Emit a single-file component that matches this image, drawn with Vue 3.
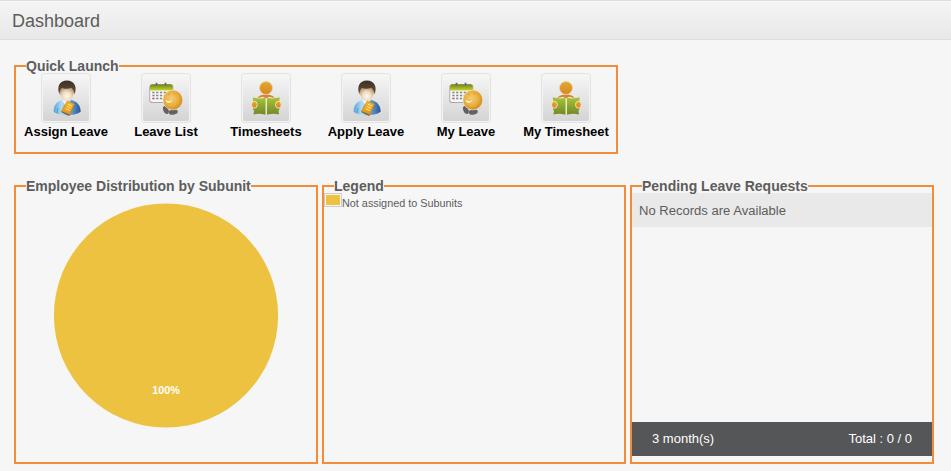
<script setup>
const shortcuts = [
  { label: 'Assign Leave', icon: 'person' },
  { label: 'Leave List', icon: 'calendar' },
  { label: 'Timesheets', icon: 'reader' },
  { label: 'Apply Leave', icon: 'person' },
  { label: 'My Leave', icon: 'calendar' },
  { label: 'My Timesheet', icon: 'reader' },
]
const dayColumns = [0, 1, 2, 3, 4]
const dayRows = [0, 1, 2]
</script>

<template>
  <svg class="defs" width="0" height="0" aria-hidden="true">
    <defs>
      <linearGradient id="tile" x1="0" y1="0" x2="0" y2="1">
        <stop offset="0" stop-color="#f6f6f6" /><stop offset="1" stop-color="#d4d4d4" />
      </linearGradient>
      <linearGradient id="shirt" x1="0" y1="0" x2="1" y2="0">
        <stop offset="0" stop-color="#55a5d8" /><stop offset="0.3" stop-color="#b5dcf3" />
        <stop offset="0.6" stop-color="#6ca6d2" /><stop offset="1" stop-color="#28559a" />
      </linearGradient>
      <radialGradient id="face" cx="0.5" cy="0.68" r="0.6">
        <stop offset="0" stop-color="#fff8ec" /><stop offset="0.5" stop-color="#eddcc2" /><stop offset="1" stop-color="#b8946b" />
      </radialGradient>
      <linearGradient id="hair" x1="0" y1="0" x2="0" y2="1">
        <stop offset="0" stop-color="#3b3027" /><stop offset="1" stop-color="#66503c" />
      </linearGradient>
      <linearGradient id="card" x1="0" y1="0" x2="0" y2="1">
        <stop offset="0" stop-color="#f6b51f" /><stop offset="1" stop-color="#e29518" />
      </linearGradient>
      <linearGradient id="band" x1="0" y1="0" x2="0" y2="1">
        <stop offset="0" stop-color="#75801c" /><stop offset="1" stop-color="#c0d62b" />
      </linearGradient>
      <radialGradient id="ball" cx="0.42" cy="0.42" r="0.62">
        <stop offset="0" stop-color="#f6cc71" /><stop offset="0.6" stop-color="#e9ae3d" /><stop offset="1" stop-color="#cb8626" />
      </radialGradient>
      <linearGradient id="skin" x1="0" y1="0" x2="0" y2="1">
        <stop offset="0" stop-color="#e3aa2d" /><stop offset="1" stop-color="#d98528" />
      </linearGradient>
      <linearGradient id="book" x1="0" y1="0" x2="0" y2="1">
        <stop offset="0" stop-color="#a9c532" /><stop offset="1" stop-color="#71872a" />
      </linearGradient>
    </defs>
  </svg>

  <header class="heading"><h1>Dashboard</h1></header>

  <main>
    <section class="panel quick">
      <h2>Quick Launch</h2>
      <nav class="shortcuts">
        <a v-for="item in shortcuts" :key="item.label" class="shortcut">
          <svg width="50" height="50" viewBox="0 0 50 50">
            <rect x="0.5" y="0.5" width="49" height="49" rx="3" fill="#f4f4f3" stroke="#e2e2de" />
            <rect x="2" y="2" width="46" height="46" rx="2" fill="url(#tile)" />
            <g v-if="item.icon === 'person'">
              <path d="M12.700 38.800C12.500 32 16 28.500 21.500 26.700H30C36 28.500 39.500 32 39.700 38.800C36 41.500 31 42.300 26 42.300S15.500 41.500 12.700 38.800Z" fill="url(#shirt)" />
              <path d="M21 27L24.500 33L30 27Z" fill="#edf4f9" />
              <path d="M16 40L17 35M36.500 39.500L35 35" stroke="#3473a6" stroke-width="0.500" fill="none" />
              <path d="M18.600 18Q18.800 13 25.500 13T33 18C33 23 29.500 28 26 28S18.600 23 18.600 18Z" fill="url(#face)" />
              <path d="M18.400 21.500C15.700 14 18 7.700 26 7.500C33.500 7.700 36.500 14 33.500 21.500C33.200 18 32 16.300 30.500 14.700C27.500 16 23 16 21 14.700C19.300 16.300 18.700 18.500 18.400 21.500Z" fill="url(#hair)" />
              <path d="M26.300 28L33.500 31L28.800 41.800L20.500 37.800Z" fill="url(#card)" stroke="#b9781d" stroke-width="0.500" stroke-linejoin="round" />
              <path d="M20.300 38L28.700 42L28.300 43L20.500 39.200Z" fill="#6a5437" />
              <path d="M26.800 31.200L31 33M25.800 33.500L30 35.300M24.800 35.800L28.800 37.500" stroke="#ffeaa2" stroke-width="1" />
            </g>
            <g v-else-if="item.icon === 'calendar'">
              <rect x="8.300" y="11.500" width="24" height="18.500" rx="2.800" fill="#a8a8a8" />
              <rect x="9.200" y="12" width="22.200" height="17" rx="2" fill="#f8f8f8" />
              <path d="M9 17.500V13.500Q9 11.300 11.200 11.300H29.600Q31.800 11.300 31.800 13.500V17.500Z" fill="url(#band)" />
              <path d="M15.500 9.700V12.500M24.500 9.700V12.500" stroke="#65686b" stroke-width="1.700" />
              <g v-for="row in dayRows" :key="row">
                <rect v-for="col in dayColumns" :key="col" :x="11.3 + col * 3.8" :y="18.700 + row * 3" width="2.300" height="1.600" :fill="row === 2 && col === 0 ? '#c75b40' : '#88888d'" />
              </g>
              <ellipse cx="24.900" cy="37" rx="2.600" ry="4.200" transform="rotate(-22 24.900 37)" fill="#626362" />
              <ellipse cx="32.300" cy="39" rx="4.500" ry="2.700" transform="rotate(-8 32.300 39)" fill="#626362" />
              <circle cx="31.800" cy="27" r="9.900" fill="url(#ball)" stroke="#f6e7c7" stroke-width="0.600" />
              <path d="M24.500 26.700Q28.500 29.500 31.200 27.200Q30 30.300 27 29.800Q25 29.300 24.500 26.700Z" fill="#fffbea" />
              <path d="M27.500 21.500L28.500 21M33 20.500L34 21" stroke="#c17a20" stroke-width="0.800" />
            </g>
            <g v-else>
              <path d="M16.500 25Q18 21.700 25 21.500Q32 21.700 33.500 25L28 23.800L25 25.500L22 23.800Z" fill="#d8842d" />
              <circle cx="25" cy="15" r="6.500" fill="url(#skin)" stroke="#f0d6a7" stroke-width="0.600" />
              <path d="M11.800 24.300Q18.500 26.300 24.700 24.800V41.800Q18 39.800 12.500 41.500L13 38Q11 35 12.500 31Z" fill="url(#book)" />
              <path d="M38.700 24.300Q32 26.300 25.800 24.800V41.800Q32.500 39.800 38 41.500L37.500 38Q39.500 35 38 31Z" fill="url(#book)" />
              <path d="M25.250 25V42" stroke="#f0f3dc" stroke-width="1" />
              <ellipse cx="13.400" cy="31.700" rx="2.900" ry="3.500" fill="url(#skin)" stroke="#f7f0d9" stroke-width="0.800" />
              <ellipse cx="37.400" cy="31.700" rx="2.900" ry="3.500" fill="url(#skin)" stroke="#f7f0d9" stroke-width="0.800" />
            </g>
          </svg>
          <span>{{ item.label }}</span>
        </a>
      </nav>
    </section>

    <div class="row">
      <section class="panel">
        <h2>Employee Distribution by Subunit</h2>
        <svg class="pie" width="300" height="260" viewBox="0 0 300 260">
          <circle cx="150" cy="122.500" r="112.100" fill="#edc240" />
          <text x="150" y="201" text-anchor="middle">100%</text>
        </svg>
      </section>
      <section class="panel">
        <h2>Legend</h2>
        <div class="entry"><i class="swatch"></i><span>Not assigned to Subunits</span></div>
      </section>
      <section class="panel pending">
        <h2>Pending Leave Requests</h2>
        <p class="empty">No Records are Available</p>
        <footer><span>3 month(s)</span><span>Total : 0 / 0</span></footer>
      </section>
    </div>
  </main>
</template>

<style>
body { background: #f6f6f6; overflow: hidden; }
#app { font-family: "Liberation Sans", Arial, sans-serif; color: #5d5d5d; }
</style>

<style scoped>
* { box-sizing: border-box; }
.defs { position: absolute; }
.heading {
  height: 40px; padding-left: 12px; display: flex; align-items: center;
  border-top: 1px solid #dedede; border-bottom: 1px solid #dedede;
  background: linear-gradient(#f5f5f5, #e8e8e8);
}
h1 { margin: 0; font-size: 18px; font-weight: 400; line-height: 20px; padding-top: 1px; }
main { padding: 25px 14px 0; }
.panel {
  width: 304px; height: 279px; border: 2px solid #f28c38;
  display: flex; flex-direction: column; align-items: flex-start;
}
.quick { width: 604px; height: 89px; }
h2 {
  position: relative; z-index: 1;
  margin: -9px 0 0 10px; height: 15px; line-height: 16px; flex: none;
  background: #f6f6f6; font-size: 14px; font-weight: 700; white-space: nowrap;
}
.shortcuts { display: flex; }
.shortcut { width: 100px; display: flex; flex-direction: column; align-items: center; color: #000; font-size: 13px; font-weight: 700; white-space: nowrap; }
.shortcut span { line-height: 15px; margin-top: 1px; }
.row { display: flex; gap: 4px; margin-top: 31px; }
.pie { display: block; }
.pie text { font-size: 10.800px; font-weight: 700; fill: #fff; }
.entry { display: flex; font-size: 10.830px; line-height: 13px; }
.entry span { padding-top: 4px; }
.swatch { width: 18px; height: 14px; border: 1px solid #ccc; padding: 1px; background: #edc240 content-box; }
.empty { margin: 0; width: 100%; height: 34px; padding-left: 7px; background: #e9e9e9; font-size: 13.050px; line-height: 35px; }
footer {
  width: 100%; height: 34px; margin-top: auto; margin-bottom: 6px; padding: 0 20px;
  display: flex; justify-content: space-between; background: #555658; color: #fff; font-size: 13px; line-height: 34px;
}
</style>
